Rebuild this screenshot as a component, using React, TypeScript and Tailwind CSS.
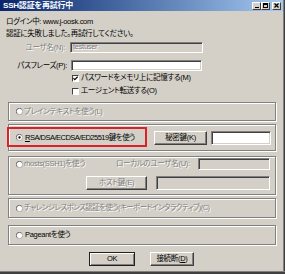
import type { ReactNode } from "react";

const font =
  "font-['Liberation_Sans','Noto_Sans_CJK_JP',sans-serif] [font-feature-settings:'palt'] tracking-[-0.3px]";
const dis = "text-[#808080] [text-shadow:1px_1px_0_#ffffff]";

function Sunken({ className = "", disabled = false }: { className?: string; disabled?: boolean }) {
  return (
    <div
      className={`border border-t-[#808080] border-l-[#808080] border-b-white border-r-white shadow-[inset_1px_1px_0_#404040,inset_-1px_-1px_0_#d4d0c8] ${
        disabled ? "bg-[#d4d0c8]" : "bg-white"
      } ${className}`}
    />
  );
}

function Button({ children, className = "", def = false }: { children: ReactNode; className?: string; def?: boolean }) {
  return (
    <div
      className={`flex items-center justify-center bg-[#d4d0c8] ${
        def
          ? "border border-[#202020] shadow-[inset_1px_1px_0_#fff,inset_-1px_-1px_0_#808080]"
          : "border border-t-white border-l-white border-b-[#404040] border-r-[#404040] shadow-[inset_-1px_-1px_0_#808080]"
      } ${className}`}
    >
      {children}
    </div>
  );
}

function Radio({ checked = false }: { checked?: boolean }) {
  return (
    <svg width="7" height="7" viewBox="0 0 12 12" className="shrink-0">
      <circle cx="6" cy="6" r="5.5" fill="#fff" stroke="#808080" />
      <path d="M2 9.5 A5 5 0 0 1 9.5 2" fill="none" stroke="#404040" strokeWidth="1" />
      {checked && <circle cx="6" cy="6" r="2" fill="#000" />}
    </svg>
  );
}

function Check({ checked = false }: { checked?: boolean }) {
  return (
    <div className="flex h-[7px] w-[7px] shrink-0 items-center justify-center border border-t-[#404040] border-l-[#404040] border-b-white border-r-white bg-white">
      {checked && (
        <svg width="5" height="5" viewBox="0 0 7 7">
          <path d="M0.5 3 L2.5 5 L6.5 1" fill="none" stroke="#000" strokeWidth="1.6" />
        </svg>
      )}
    </div>
  );
}

function Group({ children, className = "" }: { children: ReactNode; className?: string }) {
  return (
    <div
      className={`ml-[8px] w-[268px] border border-[#808080] shadow-[inset_1px_1px_0_#fff,1px_1px_0_#fff] ${className}`}
    >
      {children}
    </div>
  );
}

export default function App() {
  return (
    <div
      className={`relative h-[274px] w-[285px] overflow-hidden whitespace-nowrap bg-[#d4d0c8] text-[7.5px] leading-[10px] text-black ${font}`}
    >
      {/* title bar */}
      <div className="flex h-[11px] w-[283px] items-center justify-between bg-gradient-to-r from-[#0a246a] to-[#a6caf0] pl-[3px] pr-[2px]">
        <span className="text-[8px] font-bold leading-[10px] tracking-[-0.2px] text-white">SSH認証を再試行中</span>
        <div className="flex items-center">
          {["min", "max"].map((k) => (
            <div
              key={k}
              className="flex h-[8px] w-[9px] items-end justify-center border border-t-white border-l-white border-b-[#404040] border-r-[#404040] bg-[#d4d0c8] pb-[1px]"
            >
              {k === "min" ? (
                <div className="h-[1px] w-[4px] bg-black" />
              ) : (
                <div className="h-[5px] w-[5px] border border-t-2 border-black" />
              )}
            </div>
          ))}
          <div className="ml-[2px] flex h-[8px] w-[9px] items-center justify-center border border-t-white border-l-white border-b-[#404040] border-r-[#404040] bg-[#d4d0c8]">
            <svg width="5" height="5" viewBox="0 0 5 5">
              <path d="M0.5 0.5 L4.5 4.5 M4.5 0.5 L0.5 4.5" stroke="#000" strokeWidth="1.2" />
            </svg>
          </div>
        </div>
      </div>

      <div className="flex flex-col">
        <div className="ml-[6px] mt-[6px] h-[10px]">ログイン中: www.j-oosk.com</div>
        <div className="ml-[6px] mt-[2px] h-[10px]">認証に失敗しました。再試行してください。</div>

        <div className="mt-[3px] flex h-[11px] items-center">
          <span className={`w-[65px] text-right ${dis}`}>ユーザ名(N):</span>
          <div className="relative ml-[5px] h-[11px] w-[133px]">
            <Sunken disabled className="h-full w-full" />
            <span className={`absolute left-[3px] top-[0px] ${dis}`}>testuser</span>
          </div>
        </div>

        <div className="mt-[7px] flex h-[11px] items-center">
          <span className="w-[67px] text-right">パスフレーズ(P):</span>
          <Sunken className="ml-[4px] h-[11px] w-[131px]" />
        </div>

        <div className="ml-[72px] mt-[2px] flex h-[10px] items-center gap-[1px]">
          <Check checked />
          <span className="ml-[1px]">パスワードをメモリ上に記憶する(M)</span>
        </div>
        <div className="ml-[72px] mt-[3px] flex h-[10px] items-center gap-[1px]">
          <Check />
          <span className="ml-[1px]">エージェント転送する(O)</span>
        </div>

        <Group className="mt-[6px] flex h-[19px] items-center pl-[7px]">
          <Radio />
          <span className={`ml-[1px] ${dis}`}>プレインテキストを使う(L)</span>
        </Group>

        <Group className="relative mt-[3px] flex h-[27px] items-center pl-[7px]">
          <Radio checked />
          <span className="ml-[2px] w-[121px] tracking-[-0.5px]">
            <span className="underline">R</span>SA/DSA/ECDSA/ED25519鍵を使う
          </span>
          <Button className="ml-[8px] h-[14px] w-[53px]">秘密鍵(K)</Button>
          <Sunken className="ml-[4px] h-[14px] w-[60px]" />
          <div className="absolute left-[-2px] top-[2px] h-[20px] w-[140px] border-2 border-[#d8232a]" />
        </Group>

        <Group className="mt-[5px] h-[39px] pl-[7px]">
          <div className="mt-[1px] flex h-[12px] items-center">
            <Radio />
            <span className={`ml-[1px] w-[92px] ${dis}`}>rhosts(SSH1)を使う</span>
            <span className={`w-[82px] ${dis}`}>ローカルのユーザ名(U):</span>
            <Sunken disabled className="h-[12px] w-[72px]" />
          </div>
          <div className="mt-[6px] flex h-[14px] items-center">
            <Button className={`ml-[70px] h-[14px] w-[61px] ${dis}`}>ホスト鍵(E)</Button>
            <Sunken disabled className="ml-[9px] h-[14px] w-[114px]" />
          </div>
        </Group>

        <Group className="mt-[3px] flex h-[20px] items-center pl-[7px]">
          <Radio />
          <span className={`ml-[1px] tracking-[-0.6px] ${dis}`}>
            チャレンジレスポンス認証を使う(キーボードインタラクティブ)(C)
          </span>
        </Group>

        <Group className="mt-[7px] flex h-[20px] items-center pl-[7px]">
          <Radio />
          <span className="ml-[2px]">Pageantを使う</span>
        </Group>

        <div className="mt-[7px] flex h-[14px] items-center">
          <Button def className="ml-[89px] h-[14px] w-[46px]">OK</Button>
          <Button className="ml-[15px] h-[14px] w-[44px]">
            <span>
              接続断(<span className="underline">D</span>)
            </span>
          </Button>
        </div>
      </div>

      {/* window frame right/bottom */}
      <div className="absolute right-0 top-0 h-full w-[2px] border-l border-[#808080] bg-[#404040]" />
      <div className="absolute bottom-0 left-0 h-[3px] w-full border-t border-[#808080] bg-[#404040]" />
    </div>
  );
}
